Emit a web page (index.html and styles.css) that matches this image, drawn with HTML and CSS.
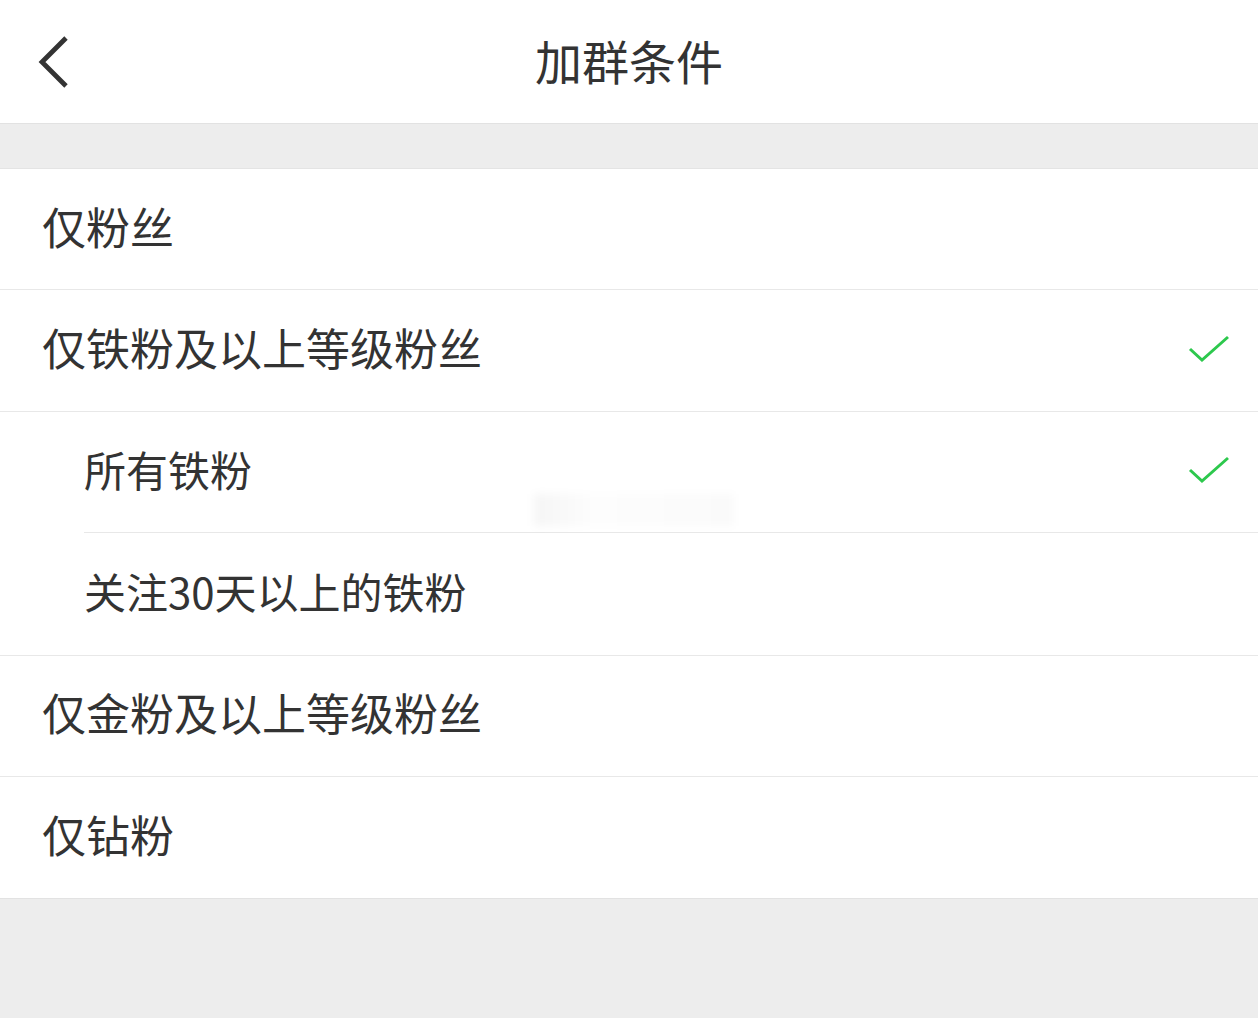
FILE: index.html
```html
<!doctype html>
<html lang="zh">
  <head>
    <meta charset="UTF-8" />
    <meta name="viewport" content="width=device-width, initial-scale=1.0" />
    <title>加群条件</title>
    <link rel="stylesheet" href="styles.css">
  </head>
  <body>
    <div class="header">
      <span class="back">
        <svg width="40" height="60" viewBox="0 0 40 60">
          <path d="M28 3 L4 27 L28 51" fill="none" stroke="#333" stroke-width="4.8"/>
        </svg>
      </span>
      <h1>加群条件</h1>
    </div>

    <div class="gap"></div>

    <div class="list">
      <div class="row">仅粉丝</div>
      <div class="row">
        <span>仅铁粉及以上等级粉丝</span>
        <svg class="check" width="44" height="34" viewBox="0 0 44 34">
          <path d="M2 14 L14 25 L40 2" fill="none" stroke="#2dc84d" stroke-width="3"/>
        </svg>
      </div>
      <div class="group">
        <div class="row sub">
          <span>所有铁粉</span>
          <svg class="check" width="44" height="34" viewBox="0 0 44 34">
            <path d="M2 14 L14 25 L40 2" fill="none" stroke="#2dc84d" stroke-width="3"/>
          </svg>
          <div class="mark"></div>
        </div>
        <div class="row sub">关注30天以上的铁粉</div>
      </div>
      <div class="row">仅金粉及以上等级粉丝</div>
      <div class="row">仅钻粉</div>
    </div>
  </body>
</html>
```

FILE: styles.css
```css
body {
  margin: 0;
  background: #ededed;
  font-family: "Noto Sans CJK SC", "Noto Sans", sans-serif;
  color: #333;
}

.header {
  height: 123px;
  background: white;
  border-bottom: 1px solid #e2e2e2;
  display: flex;
  align-items: center;
  justify-content: center;
  position: relative;
}

.header h1 {
  margin: 0 0 4px;
  font-size: 47px;
  font-weight: 400;
}

.back {
  position: absolute;
  left: 38px;
  top: 35px;
}

.gap {
  height: 44px;
  border-bottom: 1px solid #e4e4e4;
}

.list {
  background: white;
  border-bottom: 1px solid #e2e2e2;
}

.row {
  box-sizing: border-box;
  height: 121.4px;
  padding: 0 28px 7px 42px;
  display: flex;
  align-items: center;
  justify-content: space-between;
  font-size: 44px;
  border-bottom: 1px solid #e8e8e8;
  position: relative;
}

.check {
  margin-top: 10px;
  margin-right: -2px;
}

.list > .row:last-child {
  border-bottom: none;
}

.group {
  border-bottom: 1px solid #e8e8e8;
}

.row.sub {
  margin-left: 84px;
  padding-left: 0;
  font-size: 42px;
}

.row.sub:last-child {
  border-bottom: none;
}

.mark {
  position: absolute;
  left: 450px;
  top: 82px;
  width: 200px;
  height: 32px;
  background: linear-gradient(90deg, rgba(0, 0, 0, 0.04), rgba(0, 0, 0, 0.008) 30%, rgba(0, 0, 0, 0.02));
  filter: blur(4px);
}
```
